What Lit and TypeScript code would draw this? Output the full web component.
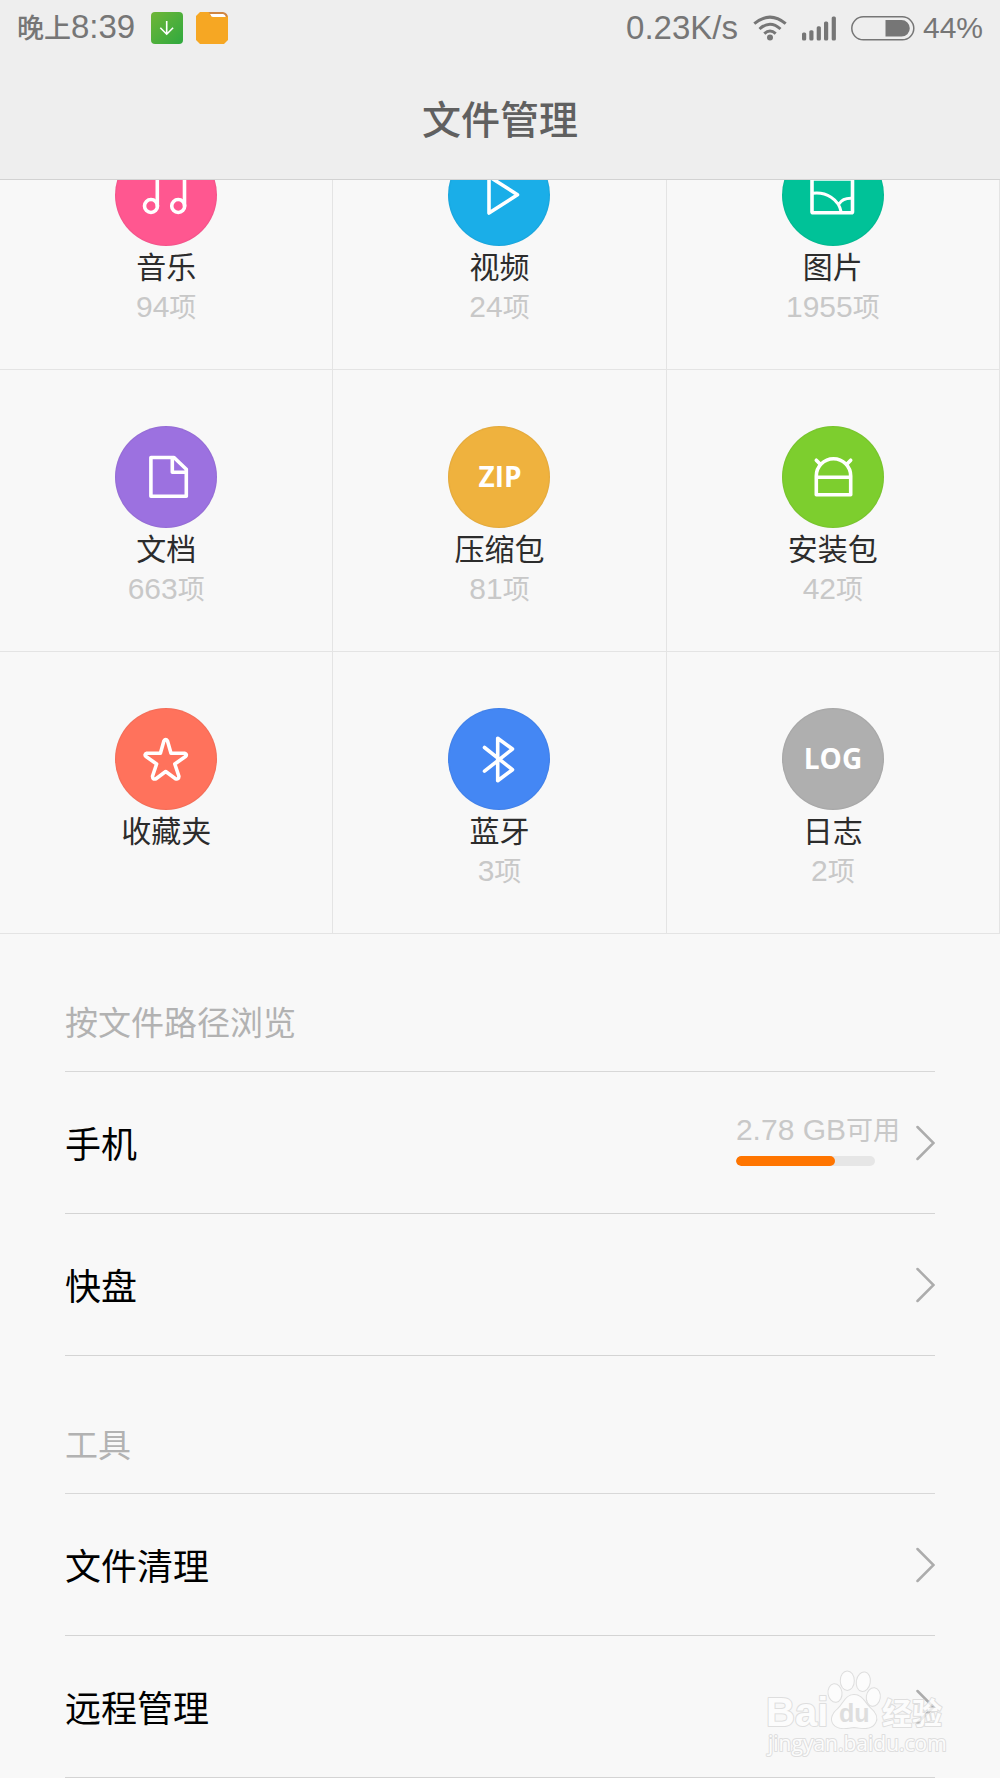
import { LitElement, html, svg, css, nothing, type SVGTemplateResult } from "lit";
import { customElement, property } from "lit/decorators.js";
import { styleMap } from "lit/directives/style-map.js";

interface Category {
  label: string;
  count?: number;
  color: string;
  icon: SVGTemplateResult;
}

interface PathEntry {
  label: string;
  free?: string;
  used?: number;
}

const CATEGORIES: Category[] = [
  {
    label: "音乐",
    count: 94,
    color: "#ff5790",
    icon: svg`<circle cx="36" cy="62" r="6.500"/><path d="M42.300 62V30L69.500 25V62"/><circle cx="63.200" cy="62" r="6.500"/>`,
  },
  {
    label: "视频",
    count: 24,
    color: "#1aaee8",
    icon: svg`<path d="M41 32.500L69.500 50.800L41 69Z"/>`,
  },
  {
    label: "图片",
    count: 1955,
    color: "#00c298",
    icon: svg`<rect x="30" y="35" width="40.500" height="33.700" rx="1"/><path stroke-width="3" d="M30.500 49.300C44 47.500 57 55 59.300 68.500M57 60C59.500 56 64 54 70 54.300"/>`,
  },
  {
    label: "文档",
    count: 663,
    color: "#9c71e0",
    icon: svg`<path d="M35.900 31.500H59L71.300 43.300V70.300H35.900Z"/><path d="M57.300 32V46.300H71"/>`,
  },
  {
    label: "压缩包",
    count: 81,
    color: "#efb23e",
    icon: svg`<text class="word" x="52" y="61" text-anchor="middle">ZIP</text>`,
  },
  {
    label: "安装包",
    count: 42,
    color: "#7dce2e",
    icon: svg`<path d="M34.300 68.700V50A17.200 17.200 0 0 1 68.700 50V68.700ZM34.300 51.200H68.700M34.300 34.200L38 38M68.700 34.200L65 38"/>`,
  },
  {
    label: "收藏夹",
    color: "#ff725c",
    icon: svg`<path d="M48.900 32.900Q50.700 30 52.500 32.900L56 45.300H69.500Q72.600 46.300 70.500 48.600L59.800 56L63.900 68.300Q63.700 71.800 60.500 70.700L50.700 63.500L41 70.700Q37.600 71.800 37.500 68.300L41.600 56L31 48.600Q28.800 46.300 31.900 45.300H45.400Z"/>`,
  },
  {
    label: "蓝牙",
    count: 3,
    color: "#4487f4",
    icon: svg`<path d="M36.500 39.500L64.500 61.700L49.700 72.700V30.300L64.500 41L36.500 63.200"/>`,
  },
  {
    label: "日志",
    count: 2,
    color: "#afafaf",
    icon: svg`<text class="word" x="51" y="61" text-anchor="middle">LOG</text>`,
  },
];

const PATHS: PathEntry[] = [
  { label: "手机", free: "2.78 GB", used: 71 },
  { label: "快盘" },
];

const TOOLS: PathEntry[] = [{ label: "文件清理" }, { label: "远程管理" }];

const FONT = css`"Liberation Sans", "Noto Sans CJK SC", sans-serif`;

@customElement("status-bar")
class StatusBar extends LitElement {
  static styles = css`
    :host {
      display: flex;
      align-items: center;
      justify-content: space-between;
      height: 56px;
      padding: 0 17px;
      color: #767676;
      font-family: ${FONT};
    }
    .side {
      display: flex;
      align-items: center;
    }
    .left {
      gap: 13px;
    }
    .right {
      gap: 15px;
    }
    .power {
      display: flex;
      align-items: center;
      gap: 8px;
    }
    .text {
      font-size: 33px;
      line-height: 56px;
      white-space: nowrap;
    }
    .clock {
      margin-right: 3px;
    }
    .small {
      font-size: 27px;
      font-weight: 500;
    }
    .percent {
      font-size: 30px;
    }
    svg {
      display: block;
    }
  `;

  render() {
    return html`
      <div class="side left">
        <span class="text clock"><span class="small">晚上</span>8:39</span>
        <svg width="32" height="32" viewBox="0 0 32 32" aria-hidden="true">
          <defs>
            <linearGradient id="leaf" x1="0" y1="0" x2="1" y2="1">
              <stop offset="0" stop-color="#6fb637" />
              <stop offset="1" stop-color="#2fa93f" />
            </linearGradient>
          </defs>
          <rect width="32" height="32" rx="4" fill="url(#leaf)" />
          <path d="M15.700 9V22M9.300 15.700L15.700 22.200L22.100 15.700" fill="none" stroke="#fff" stroke-width="1.600" />
        </svg>
        <svg width="32" height="32" viewBox="0 0 32 32" aria-hidden="true">
          <path d="M12 0H27Q32 1 32 6V10H14Z" fill="#d08642" />
          <path d="M14 2H27Q29.500 2.500 30 6H16Z" fill="#fff" />
          <path d="M4 0H12Q13.500 0 14 2.500Q14.800 5 17 5H30Q31.500 5 32 4V28L28 32H4L0 28V4Z" fill="#f6a723" />
        </svg>
      </div>
      <div class="side right">
        <span class="text">0.23K/s</span>
        <svg width="34" height="26" viewBox="0 0 34 26" aria-hidden="true">
          <g fill="none" stroke="#767676" stroke-width="3">
            <path d="M1.300 8.700Q17 -4.500 32.700 8.700" />
            <path d="M6.500 14Q17 4.500 27.500 14" />
            <path d="M11.300 18.600Q17 13.300 22.700 18.600" />
          </g>
          <circle cx="17" cy="22.500" r="3" fill="#767676" />
        </svg>
        <svg width="34" height="25" viewBox="0 0 34 25" fill="#767676" aria-hidden="true">
          <rect x="0" y="16.500" width="4.200" height="8" rx="1.500" />
          <rect x="7.300" y="14.200" width="4.200" height="10.300" rx="1.500" />
          <rect x="14.700" y="10.200" width="4.200" height="14.300" rx="1.500" />
          <rect x="22" y="5.500" width="4.200" height="19" rx="1.500" />
          <rect x="29.700" y="0.500" width="4.200" height="24" rx="1.500" />
        </svg>
        <span class="power">
          <svg width="64" height="25" viewBox="0 0 64 25" aria-hidden="true">
            <rect x="0.800" y="0.800" width="62" height="23" rx="11.500" fill="none" stroke="#767676" stroke-width="1.500" />
            <path d="M34.500 4H50.500A8.300 8.300 0 0 1 50.500 20.600H34.500Z" fill="#767676" />
          </svg>
          <span class="text percent">44%</span>
        </span>
      </div>
    `;
  }
}

@customElement("category-grid")
class CategoryGrid extends LitElement {
  @property({ attribute: false }) items: Category[] = [];

  static styles = css`
    :host {
      display: block;
      overflow: hidden;
      font-family: ${FONT};
    }
    /* The list is scrolled: the top of the first row lies under the header. */
    .grid {
      display: grid;
      grid-template-columns: repeat(3, 1fr);
      grid-auto-rows: 282px;
      margin-top: -92px;
    }
    .cell {
      display: flex;
      flex-direction: column;
      align-items: center;
      box-sizing: border-box;
      margin: 0;
      padding: 56px 0 0;
      border: 0;
      border-right: 1px solid #e4e4e4;
      border-bottom: 1px solid #e4e4e4;
      background: none;
      font: inherit;
    }
    .disc {
      display: block;
      width: 102px;
      height: 102px;
      border-radius: 50%;
      box-shadow: inset 0 0 2px rgba(0, 0, 0, 0.15);
      fill: none;
      stroke: #fff;
      stroke-width: 3.6px;
      stroke-linecap: round;
      stroke-linejoin: round;
    }
    .word {
      fill: #fff;
      stroke: none;
      font: 700 28px "Open Sans", sans-serif;
    }
    .label {
      margin-top: 2px;
      color: #2c2c2c;
      font-size: 30px;
      line-height: 40px;
    }
    .count {
      color: #c8c8c8;
      font-size: 30px;
      line-height: 38px;
    }
    .unit {
      font-size: 27px;
    }
  `;

  render() {
    return html`<div class="grid">
      ${this.items.map(
        (c) => html`<button class="cell" type="button">
          <svg class="disc" viewBox="0 0 102 102" aria-hidden="true" style=${styleMap({ background: c.color })}>
            ${c.icon}
          </svg>
          <span class="label">${c.label}</span>
          ${c.count === undefined
            ? nothing
            : html`<span class="count">${c.count}<span class="unit">项</span></span>`}
        </button>`,
      )}
    </div>`;
  }
}

@customElement("entry-list")
class EntryList extends LitElement {
  @property() heading = "";
  @property({ attribute: false }) items: PathEntry[] = [];

  static styles = css`
    :host {
      display: block;
      padding: 0 65px;
      font-family: ${FONT};
    }
    .heading {
      box-sizing: border-box;
      height: 138px;
      margin: 0;
      padding-top: 67px;
      border-bottom: 1px solid #d8d8d8;
      color: #b2b2b2;
      font-size: 33px;
      font-weight: 400;
      line-height: 46px;
    }
    .row {
      display: flex;
      align-items: center;
      gap: 16px;
      box-sizing: border-box;
      width: 100%;
      height: 142px;
      margin: 0;
      padding: 0;
      border: 0;
      border-bottom: 1px solid #d4d4d4;
      background: none;
      color: #000;
      font: inherit;
      text-align: left;
    }
    .name {
      flex: 1;
      padding-top: 6px;
      font-size: 36px;
      line-height: 48px;
    }
    .storage {
      display: flex;
      flex-direction: column;
      gap: 6px;
      padding-bottom: 8px;
      color: #c8c8c8;
      font-size: 30px;
      line-height: 38px;
    }
    .unit {
      font-size: 27px;
    }
    .track {
      width: 139px;
      height: 10px;
      border-radius: 5px;
      background: #e6e6e6;
      overflow: hidden;
    }
    .fill {
      height: 100%;
      border-radius: 5px;
      background: #ff7500;
    }
    .chevron {
      display: block;
      fill: none;
      stroke: #acacac;
      stroke-width: 2.5px;
      stroke-linecap: round;
    }
  `;

  render() {
    return html`
      <h2 class="heading">${this.heading}</h2>
      ${this.items.map(
        (e) => html`<button class="row" type="button">
          <span class="name">${e.label}</span>
          ${e.free
            ? html`<span class="storage">
                <span>${e.free}<span class="unit">可用</span></span>
                <span class="track"><div class="fill" style=${styleMap({ width: `${e.used}%` })}></div></span>
              </span>`
            : nothing}
          <svg class="chevron" width="19" height="36" viewBox="0 0 19 36" aria-hidden="true">
            <path d="M1.500 2L17.500 18L1.500 34" />
          </svg>
        </button>`,
      )}
    `;
  }
}

@customElement("site-mark")
class SiteMark extends LitElement {
  static styles = css`
    :host {
      display: block;
      pointer-events: none;
    }
    svg {
      display: block;
      overflow: visible;
      fill: #fdfdfd;
      stroke: #d8d8d8;
      stroke-width: 2px;
      paint-order: stroke;
      stroke-linejoin: round;
    }
    .brand {
      font: 700 40px "Liberation Sans", sans-serif;
    }
    .inner {
      font: 700 25px "Liberation Sans", sans-serif;
      fill: #d8d8d8;
      stroke: none;
    }
    .han {
      font: 700 30px "Noto Sans CJK SC", sans-serif;
    }
    .host {
      font: 400 21px "Open Sans", sans-serif;
    }
  `;

  render() {
    return html`<svg width="186" height="92" viewBox="0 0 186 92">
      <text class="brand" x="4" y="58">Bai</text>
      <ellipse cx="85.300" cy="12.700" rx="6.500" ry="9.300" />
      <ellipse cx="101.300" cy="13.700" rx="6.500" ry="9.300" transform="rotate(10 101.300 13.700)" />
      <ellipse cx="73" cy="25" rx="6.500" ry="8.800" transform="rotate(-8 73 25)" />
      <ellipse cx="111.300" cy="29" rx="6.500" ry="8.800" transform="rotate(8 111.300 29)" />
      <path d="M92 27C100 27 102 34 108 40C114 45 116 50 113 55C109 62 99 60 92 59C85 60 76 62 71.500 56C68 51 71 45 76 41C82 35 84 27 92 27Z" />
      <text class="inner" x="77" y="54">du</text>
      <text class="han" x="120" y="56">经验</text>
      <text class="host" x="6" y="83">jingyan.baidu.com</text>
    </svg>`;
  }
}

@customElement("app-root")
class AppRoot extends LitElement {
  static styles = css`
    :host {
      display: block;
      position: relative;
      min-height: 100vh;
      background: #f8f8f8;
      font-family: ${FONT};
    }
    .header {
      box-sizing: border-box;
      height: 180px;
      border-bottom: 1px solid #d2d2d2;
      background: #eeeeee;
    }
    .title {
      margin: 0;
      padding-top: 37px;
      color: #606060;
      font-size: 39px;
      font-weight: 500;
      line-height: 56px;
      text-align: center;
    }
    .mark {
      position: absolute;
      right: 52px;
      bottom: 18px;
      opacity: 0.8;
    }
  `;

  render() {
    return html`
      <header class="header">
        <status-bar></status-bar>
        <h1 class="title">文件管理</h1>
      </header>
      <main>
        <category-grid .items=${CATEGORIES}></category-grid>
        <entry-list heading="按文件路径浏览" .items=${PATHS}></entry-list>
        <entry-list heading="工具" .items=${TOOLS}></entry-list>
      </main>
      <site-mark class="mark"></site-mark>
    `;
  }
}
